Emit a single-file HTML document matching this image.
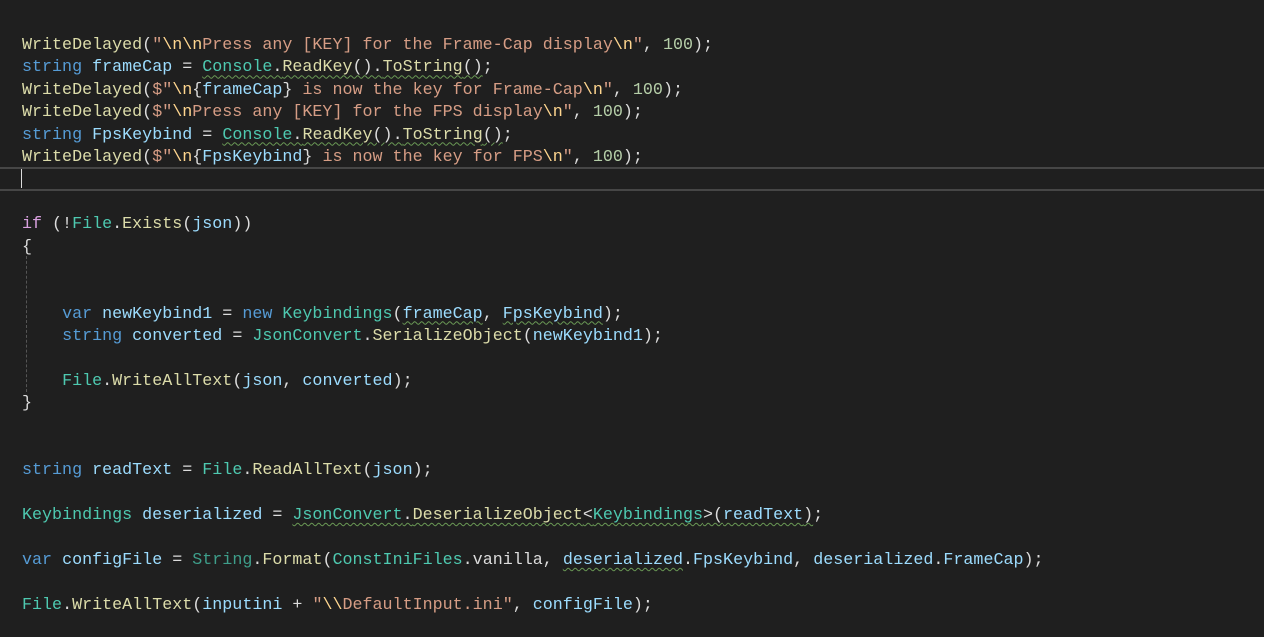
<!DOCTYPE html>
<html><head><meta charset="utf-8"><style>
html,body{margin:0;padding:0;background:#1f1f1f;width:1264px;height:637px;overflow:hidden}
.ed{position:absolute;left:22px;top:35px;font-family:"Liberation Mono","DejaVu Sans Mono",monospace;font-size:16.7px;line-height:22.4px;color:#dcdcdc}
.l{height:22.4px;white-space:pre}
.m{color:#dcdcaa}.k{color:#569cd6}.v{color:#9cdcfe}.t{color:#4ec9b0}.s{color:#d69d85}.e{color:#ffd68f}.n{color:#b5cea8}.c{color:#d8a0df}.t2{color:#3e9e8a}
.w{text-decoration:underline wavy #6a9955;text-underline-offset:3px;text-decoration-thickness:1px}
.cur{position:absolute;left:0;top:167px;width:1264px;height:20px;border-top:2px solid #464646;border-bottom:2px solid #464646}
.caret{position:absolute;left:21px;top:169px;width:1px;height:19px;background:#dcdcdc}
.guide{position:absolute;left:26px;top:256px;height:136px;border-left:1px dashed #555}
</style></head><body>
<div class="cur"></div><div class="caret"></div><div class="guide"></div>
<div class="ed"><div class="l"><span class="m">WriteDelayed</span>(<span class="s">"</span><span class="e">\n\n</span><span class="s">Press any [KEY] for the Frame-Cap display</span><span class="e">\n</span><span class="s">"</span>, <span class="n">100</span>);</div><div class="l"><span class="k">string</span> <span class="v">frameCap</span> = <span class="w"><span class="t">Console</span>.<span class="m">ReadKey</span>().<span class="m">ToString</span>()</span>;</div><div class="l"><span class="m">WriteDelayed</span>(<span class="s">$"</span><span class="e">\n</span>{<span class="v">frameCap</span>}<span class="s"> is now the key for Frame-Cap</span><span class="e">\n</span><span class="s">"</span>, <span class="n">100</span>);</div><div class="l"><span class="m">WriteDelayed</span>(<span class="s">$"</span><span class="e">\n</span><span class="s">Press any [KEY] for the FPS display</span><span class="e">\n</span><span class="s">"</span>, <span class="n">100</span>);</div><div class="l"><span class="k">string</span> <span class="v">FpsKeybind</span> = <span class="w"><span class="t">Console</span>.<span class="m">ReadKey</span>().<span class="m">ToString</span>()</span>;</div><div class="l"><span class="m">WriteDelayed</span>(<span class="s">$"</span><span class="e">\n</span>{<span class="v">FpsKeybind</span>}<span class="s"> is now the key for FPS</span><span class="e">\n</span><span class="s">"</span>, <span class="n">100</span>);</div><div class="l"> </div><div class="l"> </div><div class="l"><span class="c">if</span> (!<span class="t">File</span>.<span class="m">Exists</span>(<span class="v">json</span>))</div><div class="l">{</div><div class="l"> </div><div class="l"> </div><div class="l">    <span class="k">var</span> <span class="v">newKeybind1</span> = <span class="k">new</span> <span class="t">Keybindings</span>(<span class="v w">frameCap</span>, <span class="v w">FpsKeybind</span>);</div><div class="l">    <span class="k">string</span> <span class="v">converted</span> = <span class="t">JsonConvert</span>.<span class="m">SerializeObject</span>(<span class="v">newKeybind1</span>);</div><div class="l"> </div><div class="l">    <span class="t">File</span>.<span class="m">WriteAllText</span>(<span class="v">json</span>, <span class="v">converted</span>);</div><div class="l">}</div><div class="l"> </div><div class="l"> </div><div class="l"><span class="k">string</span> <span class="v">readText</span> = <span class="t">File</span>.<span class="m">ReadAllText</span>(<span class="v">json</span>);</div><div class="l"> </div><div class="l"><span class="t">Keybindings</span> <span class="v">deserialized</span> = <span class="w"><span class="t">JsonConvert</span>.<span class="m">DeserializeObject</span>&lt;<span class="t">Keybindings</span>&gt;(<span class="v">readText</span>)</span>;</div><div class="l"> </div><div class="l"><span class="k">var</span> <span class="v">configFile</span> = <span class="t2">String</span>.<span class="m">Format</span>(<span class="t">ConstIniFiles</span>.vanilla, <span class="v w">deserialized</span>.<span class="v">FpsKeybind</span>, <span class="v">deserialized</span>.<span class="v">FrameCap</span>);</div><div class="l"> </div><div class="l"><span class="t">File</span>.<span class="m">WriteAllText</span>(<span class="v">inputini</span> + <span class="s">"</span><span class="e">\\</span><span class="s">DefaultInput.ini"</span>, <span class="v">configFile</span>);</div></div>
</body></html>
